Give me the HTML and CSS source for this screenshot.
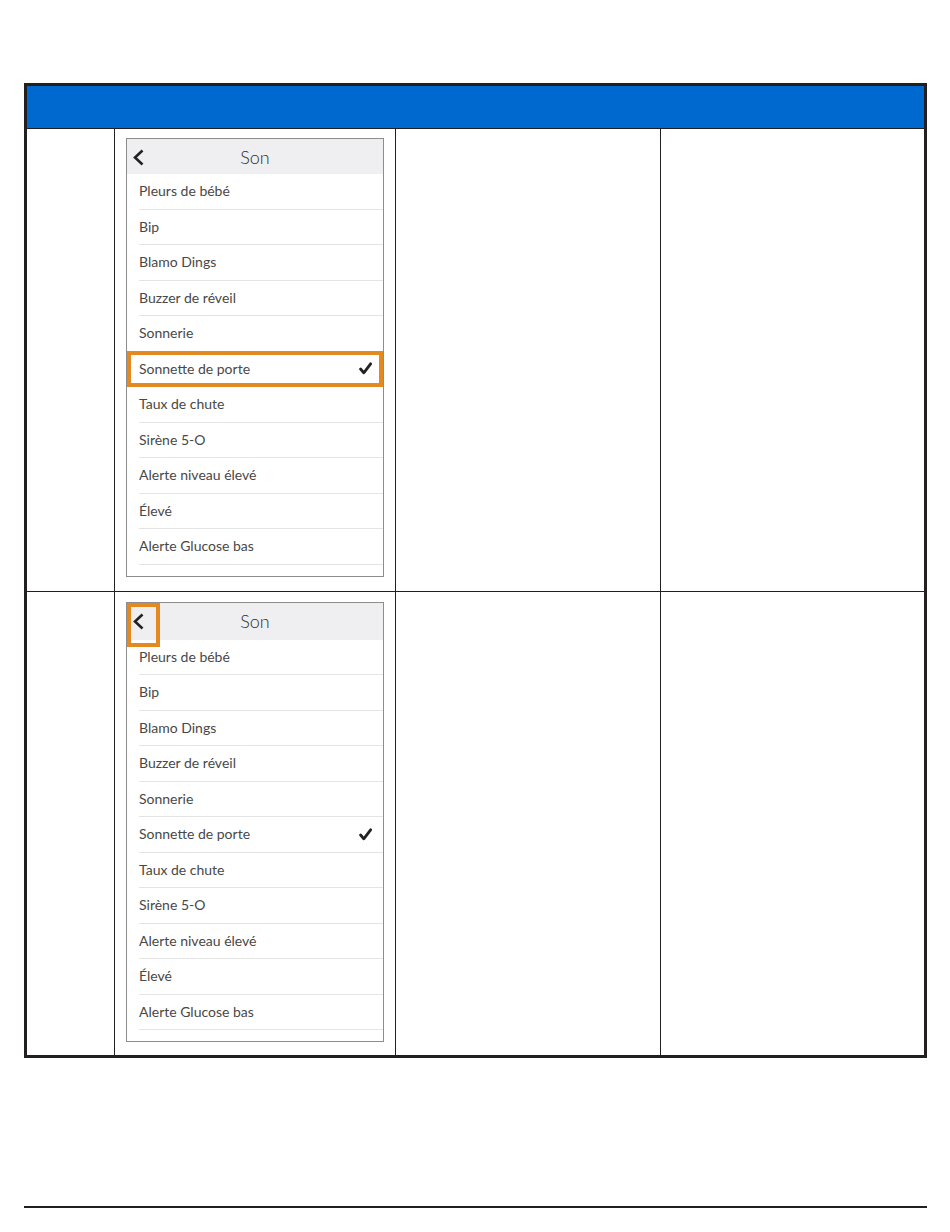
FILE: index.html
```html
<!DOCTYPE html>
<html lang="fr">
<head>
    <meta charset="UTF-8">
    <title>Son</title>
    <link rel="stylesheet" href="styles.css">
</head>
<body>
    <div class="page">
        <table class="steps">
            <colgroup>
                <col class="c-num">
                <col class="c-shot">
                <col class="c-text">
                <col class="c-text2">
            </colgroup>
            <tr>
                <th colspan="4"></th>
            </tr>
            <tr>
                <td class="num"></td>
                <td class="shot">
                    <div class="phone">
                        <div class="phone-head">
                            <span class="back">
                                <svg width="13" height="17" viewBox="0 0 13 17"><polyline points="10.5,1.5 3,8.5 10.5,15.5" fill="none" stroke="#222" stroke-width="2.6" stroke-linejoin="miter"/></svg>
                            </span>
                            <span class="title">Son</span>
                        </div>
                        <ul class="list">
                            <li>Pleurs de bébé</li>
                            <li>Bip</li>
                            <li>Blamo Dings</li>
                            <li>Buzzer de réveil</li>
                            <li>Sonnerie</li>
                            <li class="checked highlight">Sonnette de porte
                                <svg class="tick" width="13" height="13" viewBox="0 0 13 13"><path d="M1.6 7 L4.8 10.8 L11.6 1.8" fill="none" stroke="#222" stroke-width="2.8" stroke-linecap="round" stroke-linejoin="round"/></svg>
                            </li>
                            <li>Taux de chute</li>
                            <li>Sirène 5-O</li>
                            <li>Alerte niveau élevé</li>
                            <li>Élevé</li>
                            <li>Alerte Glucose bas</li>
                        </ul>
                    </div>
                </td>
                <td class="text"></td>
                <td class="text"></td>
            </tr>
            <tr>
                <td class="num"></td>
                <td class="shot second">
                    <div class="phone">
                        <div class="phone-head">
                            <span class="back highlight">
                                <svg width="13" height="17" viewBox="0 0 13 17"><polyline points="10.5,1.5 3,8.5 10.5,15.5" fill="none" stroke="#222" stroke-width="2.6" stroke-linejoin="miter"/></svg>
                            </span>
                            <span class="title">Son</span>
                        </div>
                        <ul class="list">
                            <li>Pleurs de bébé</li>
                            <li>Bip</li>
                            <li>Blamo Dings</li>
                            <li>Buzzer de réveil</li>
                            <li>Sonnerie</li>
                            <li class="checked">Sonnette de porte
                                <svg class="tick" width="13" height="13" viewBox="0 0 13 13"><path d="M1.6 7 L4.8 10.8 L11.6 1.8" fill="none" stroke="#222" stroke-width="2.8" stroke-linecap="round" stroke-linejoin="round"/></svg>
                            </li>
                            <li>Taux de chute</li>
                            <li>Sirène 5-O</li>
                            <li>Alerte niveau élevé</li>
                            <li>Élevé</li>
                            <li>Alerte Glucose bas</li>
                        </ul>
                    </div>
                </td>
                <td class="text"></td>
                <td class="text"></td>
            </tr>
        </table>

        <div class="footer-rule"></div>
    </div>
</body>
</html>
```

FILE: styles.css
```css
body {
    margin: 0;
    padding: 0;
    background-color: #fff;
    font-family: 'Lato', 'Open Sans', sans-serif;
    color: #3a3a3a;
}

.page {
    padding: 83px 23px 0 24px;
}

.steps {
    width: 903px;
    border: 3px solid #231f20;
    border-spacing: 0;
    table-layout: fixed;
}

.c-num { width: 87px; }
.c-shot { width: 281px; }
.c-text { width: 265px; }
.c-text2 { width: 264px; }

.steps th {
    height: 42px;
    padding: 0;
    background-color: #0069cf;
}

.steps td {
    border-top: 1px solid #231f20;
    border-left: 1px solid #231f20;
    vertical-align: top;
    padding: 0;
}

.steps td.num {
    border-left: none;
}

.steps td.shot {
    padding: 9px 12px 14px 11px;
}

.steps td.shot.second {
    padding-top: 10px;
    padding-bottom: 13px;
}

/* phone screenshot */
.phone {
    width: 256px;
    border: 1px solid #8d8d8d;
    background-color: #fff;
}

.phone-head {
    position: relative;
    height: 35px;
    background-color: #efeff2;
    display: flex;
    align-items: center;
    justify-content: center;
}

.second .phone-head {
    height: 37px;
}

.title {
    font-size: 18px;
    font-weight: 300;
    color: #2e2e2e;
}

.back {
    position: absolute;
    left: 5px;
    top: 10px;
    display: flex;
}

.back.highlight::after {
    content: '';
    position: absolute;
    left: -5px;
    top: -10px;
    width: 25px;
    height: 36px;
    border: 4px solid #e3891f;
}

.list {
    list-style: none;
    margin: 0;
    padding: 0 0 11px 0;
}

.list li {
    position: relative;
    margin-left: 12px;
    height: 34.5px;
    line-height: 34.5px;
    border-bottom: 1px solid #e4e4e4;
    font-size: 14px;
    color: #484848;
    display: flex;
    align-items: center;
    justify-content: space-between;
    padding-right: 11px;
}

.tick {
    display: block;
}

.list li.highlight::after {
    content: '';
    position: absolute;
    left: -12px;
    right: 0;
    top: -1px;
    bottom: -1px;
    border: 4px solid #e3891f;
}

.footer-rule {
    margin-top: 148px;
    width: 903px;
    height: 2px;
    background-color: #231f20;
}
```
